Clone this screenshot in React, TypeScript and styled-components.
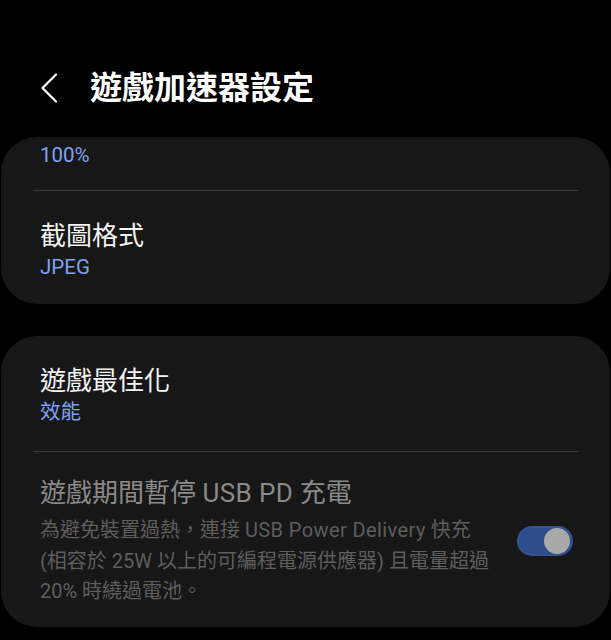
import * as React from 'react'
import styled, { createGlobalStyle } from 'styled-components'

const GlobalStyle = createGlobalStyle`
  html, body {
    margin: 0;
    padding: 0;
    background: #000;
  }
  body {
    font-family: Roboto, "Noto Sans CJK TC", "Noto Sans", sans-serif;
    -webkit-font-smoothing: antialiased;
  }
`

const Screen = styled.div`
  width: 611px;
  height: 640px;
  background: #000;
  overflow: hidden;
  display: flex;
  flex-direction: column;
`

const Header = styled.header`
  height: 48px;
  padding: 64px 0 0 40px;
  display: flex;
  align-items: center;
  gap: 32px;
`

const BackButton = styled.button`
  width: 18px;
  height: 32px;
  padding: 0;
  border: 0;
  background: none;
  display: flex;
  align-items: center;
  justify-content: center;
`

const Title = styled.h1`
  margin: 0;
  color: #fff;
  font-size: 32px;
  font-weight: 700;
  line-height: 40px;
`

const Card = styled.section`
  margin: 0 1px;
  background: #171717;
  border-radius: 36px;
  display: flex;
  flex-direction: column;
`

const FirstCard = styled(Card)`
  margin-top: 25px;
`

const NextCard = styled(Card)`
  margin-top: 32px;
`

const Item = styled.div<{ $top: number; $bottom: number }>`
  padding: ${(p) => p.$top}px 39px ${(p) => p.$bottom}px 39px;
  display: flex;
  align-items: center;
  gap: 20px;
`

const ItemText = styled.div`
  flex: 1;
  min-width: 0;
  display: flex;
  flex-direction: column;
`

const ItemTitle = styled.div<{ $disabled?: boolean }>`
  color: ${(p) => (p.$disabled ? '#8a8a8a' : '#f4f4f4')};
  font-size: 26px;
  line-height: 34px;
`

const ItemValue = styled.div`
  color: #7fa2f2;
  font-size: 20.5px;
  line-height: 28px;
`

const ItemDesc = styled.div`
  margin-top: 5px;
  color: #5e5e5e;
  font-size: 20px;
  line-height: 30.5px;
  white-space: nowrap;
`

const Latin = styled.span`
  letter-spacing: 0.4px;
`

const Divider = styled.hr`
  margin: 0 32px;
  border: 0;
  height: 1px;
  background: #3a3a3a;
`

const Switch = styled.div<{ $on: boolean }>`
  flex: none;
  width: 56px;
  height: 30px;
  margin-right: -2px;
  box-sizing: border-box;
  border-radius: 15px;
  background: #2c4c8c;
  border: 2px solid #34548f;
  display: flex;
  align-items: center;
  justify-content: ${(p) => (p.$on ? 'flex-end' : 'flex-start')};
  padding: 0 1px;
`

const Knob = styled.div`
  width: 26px;
  height: 26px;
  border-radius: 50%;
  background: #a9a9a9;
`

function ChevronLeft() {
  return (
    <svg width="18" height="30" viewBox="0 0 18 30" fill="none">
      <path d="M16 1.5 L2.5 15 L16 28.5" stroke="#fff" strokeWidth="2.2" strokeLinecap="round" strokeLinejoin="round" />
    </svg>
  )
}

export default function App() {
  return (
    <Screen>
      <GlobalStyle />
      <Header>
        <BackButton aria-label="返回">
          <ChevronLeft />
        </BackButton>
        <Title>遊戲加速器設定</Title>
      </Header>

      <FirstCard>
        <Item $top={4} $bottom={21}>
          <ItemText>
            <ItemValue>100%</ItemValue>
          </ItemText>
        </Item>
        <Divider />
        <Item $top={28} $bottom={23}>
          <ItemText>
            <ItemTitle>截圖格式</ItemTitle>
            <ItemValue>JPEG</ItemValue>
          </ItemText>
        </Item>
      </FirstCard>

      <NextCard>
        <Item $top={28} $bottom={25}>
          <ItemText>
            <ItemTitle>遊戲最佳化</ItemTitle>
            <ItemValue>效能</ItemValue>
          </ItemText>
        </Item>
        <Divider />
        <Item $top={24} $bottom={20}>
          <ItemText>
            <ItemTitle $disabled>
              遊戲期間暫停 <Latin>USB PD</Latin> 充電
            </ItemTitle>
            <ItemDesc>
              為避免裝置過熱，連接 <Latin>USB Power Delivery</Latin> 快充
              <br />
              (相容於 25W 以上的可編程電源供應器) 且電量超過
              <br />
              20% 時繞過電池。
            </ItemDesc>
          </ItemText>
          <Switch $on>
            <Knob />
          </Switch>
        </Item>
      </NextCard>
    </Screen>
  )
}
